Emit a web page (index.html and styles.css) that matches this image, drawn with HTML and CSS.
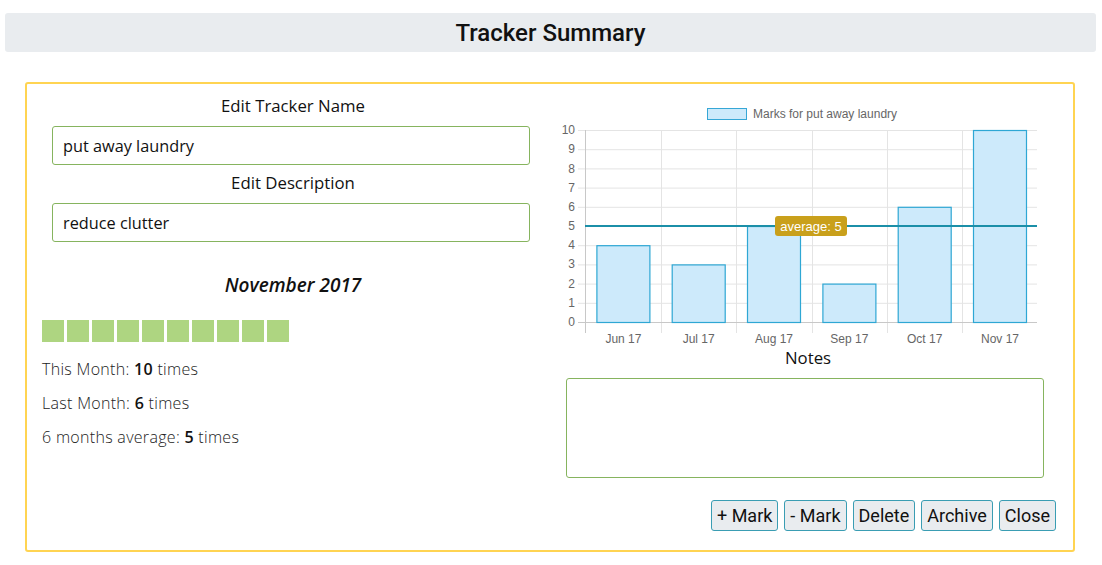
FILE: index.html
```html
<!DOCTYPE html>
<html>
<head>
<meta charset="utf-8">
<link rel="stylesheet" href="styles.css">
</head>
<body>
<header class="title-bar"><h1>Tracker Summary</h1></header>
<main class="card">
  <section class="left">
    <label class="field-label">Edit Tracker Name</label>
    <div class="text-input">put away laundry</div>
    <label class="field-label">Edit Description</label>
    <div class="text-input">reduce clutter</div>
    <h2 class="month">November 2017</h2>
    <div class="marks">
      <span></span><span></span><span></span><span></span><span></span>
      <span></span><span></span><span></span><span></span><span></span>
    </div>
    <p class="stat">This Month: <b>10</b> times</p>
    <p class="stat">Last Month: <b>6</b> times</p>
    <p class="stat">6 months average: <b>5</b> times</p>
  </section>
  <section class="right">
    <svg class="chart" width="484" height="250" viewBox="0 0 484 250" xmlns="http://www.w3.org/2000/svg" font-family="Liberation Sans, Arial, sans-serif">
      <rect x="147.5" y="8.5" width="39" height="11" fill="#cdeafb" stroke="#36a7d6" stroke-width="1"/>
      <text x="193" y="18" font-size="12" fill="#666">Marks for put away laundry</text>
      <g stroke="#e4e4e4" stroke-width="1">
        <line x1="18" y1="30.5" x2="477" y2="30.5"/>
        <line x1="18" y1="49.7" x2="477" y2="49.7"/>
        <line x1="18" y1="68.9" x2="477" y2="68.9"/>
        <line x1="18" y1="88.1" x2="477" y2="88.1"/>
        <line x1="18" y1="107.3" x2="477" y2="107.3"/>
        <line x1="18" y1="145.7" x2="477" y2="145.7"/>
        <line x1="18" y1="164.9" x2="477" y2="164.9"/>
        <line x1="18" y1="184.1" x2="477" y2="184.1"/>
        <line x1="18" y1="203.3" x2="477" y2="203.3"/>
        <line x1="101.5" y1="30" x2="101.5" y2="233"/>
        <line x1="176.5" y1="30" x2="176.5" y2="233"/>
        <line x1="252.5" y1="30" x2="252.5" y2="233"/>
        <line x1="327.5" y1="30" x2="327.5" y2="233"/>
        <line x1="402.5" y1="30" x2="402.5" y2="233"/>
      </g>
      <g stroke="#c8c8c8" stroke-width="1">
        <line x1="25.5" y1="30" x2="25.5" y2="233"/>
        <line x1="18" y1="222.5" x2="477" y2="222.5"/>
      </g>
      <g font-size="12" fill="#666" text-anchor="end">
        <text x="15" y="34">10</text>
        <text x="15" y="53">9</text>
        <text x="15" y="73">8</text>
        <text x="15" y="92">7</text>
        <text x="15" y="111">6</text>
        <text x="15" y="130">5</text>
        <text x="15" y="149">4</text>
        <text x="15" y="168">3</text>
        <text x="15" y="188">2</text>
        <text x="15" y="207">1</text>
        <text x="15" y="226">0</text>
      </g>
      <g fill="#cdeafb" stroke="#2ea7d4" stroke-width="1.2">
        <rect x="36.9" y="145.7" width="53" height="76.8"/>
        <rect x="112.2" y="164.9" width="53" height="57.6"/>
        <rect x="187.5" y="126.5" width="53" height="96"/>
        <rect x="262.9" y="184.1" width="53" height="38.4"/>
        <rect x="338.2" y="107.3" width="53" height="115.2"/>
        <rect x="413.5" y="30.5" width="53" height="192"/>
      </g>
      <g font-size="12" fill="#666" text-anchor="middle">
        <text x="63.4" y="243">Jun 17</text>
        <text x="138.7" y="243">Jul 17</text>
        <text x="214" y="243">Aug 17</text>
        <text x="289.3" y="243">Sep 17</text>
        <text x="364.7" y="243">Oct 17</text>
        <text x="440" y="243">Nov 17</text>
      </g>
      <line x1="25" y1="126" x2="477" y2="126" stroke="#1b8fa8" stroke-width="2"/>
      <rect x="215" y="116" width="72" height="20" rx="3" fill="#c9a01b"/>
      <text x="251" y="130.5" font-size="13" fill="#fff" text-anchor="middle">average: 5</text>
    </svg>
    <label class="notes-label">Notes</label>
    <div class="notes"></div>
    <div class="actions">
      <button class="btn">+ Mark</button>
      <button class="btn">- Mark</button>
      <button class="btn">Delete</button>
      <button class="btn">Archive</button>
      <button class="btn">Close</button>
    </div>
  </section>
</main>
</body>
</html>
```

FILE: styles.css
```css
* { box-sizing: border-box; }
html, body { margin: 0; padding: 0; background: #fff; }
body {
  padding: 13px 6px 0 5px;
  font-family: "Open Sans", "Noto Sans", sans-serif;
  color: #111;
}
.title-bar {
  background: #e9ecef;
  border-radius: 3px;
  height: 39px;
  display: flex;
  align-items: center;
  justify-content: center;
}
.title-bar h1 {
  margin: 0;
  font-family: Roboto, "Liberation Sans", sans-serif;
  font-weight: 500;
  font-size: 24px;
  color: #111;
}
.card {
  margin: 30px 21px 0 20px;
  border: 2px solid #ffd452;
  border-radius: 3px;
  height: 470px;
  display: grid;
  grid-template-columns: 502px 498px;
  column-gap: 16px;
  padding: 10px 15px 0 15px;
}
.left { display: flex; flex-direction: column; }
.field-label {
  display: block;
  text-align: center;
  font-size: 16.8px;
  line-height: 24px;
  color: #111;
}
.text-input {
  margin: 8px 14px 6px 10px;
  height: 39px;
  border: 1px solid #86b45e;
  border-radius: 3px;
  padding: 0 10px;
  display: flex;
  align-items: center;
  font-size: 16.3px;
  color: #111;
}
.month {
  margin: 24px 0 0 0;
  text-align: center;
  font-style: italic;
  font-weight: 600;
  font-size: 19px;
  line-height: 26px;
}
.marks {
  margin-top: 22px;
  display: flex;
  gap: 3px;
}
.marks span {
  width: 22px;
  height: 22px;
  background: #aed581;
}
.stat {
  margin: 0;
  font-size: 16px;
  letter-spacing: 0.3px;
  font-weight: 300;
  line-height: 34px;
  color: #222;
}
.stat:first-of-type { margin-top: 10px; }
.stat b { font-weight: 600; color: #111; }
.right { display: flex; flex-direction: column; }
.chart { display: block; margin-top: 6px; }
.notes-label {
  display: block;
  text-align: center;
  font-size: 16.8px;
  line-height: 22px;
  margin-top: -3px;
  margin-left: -2px;
}
.notes {
  margin: 9px 14px 0 6px;
  height: 100px;
  border: 1px solid #86b45e;
  border-radius: 3px;
}
.actions {
  display: flex;
  justify-content: flex-end;
  gap: 6px;
  margin-top: 22px;
  margin-right: 2px;
}
.btn {
  font-family: Roboto, "Liberation Sans", sans-serif;
  font-size: 18px;
  height: 31px;
  padding: 0 5px;
  background: #e9ecef;
  border: 1px solid #3a9db3;
  border-radius: 3px;
  color: #111;
}
```
